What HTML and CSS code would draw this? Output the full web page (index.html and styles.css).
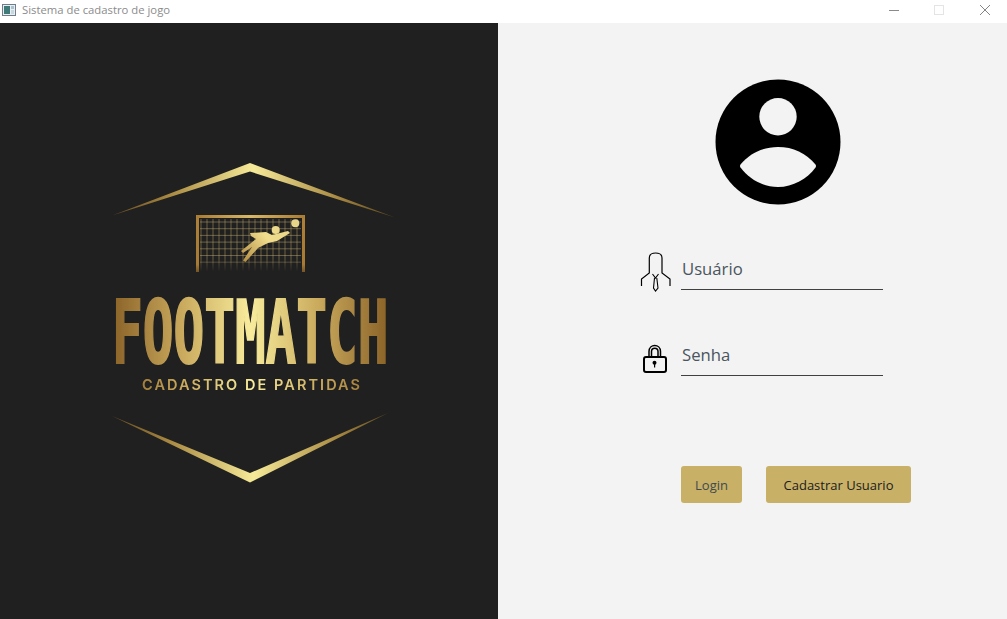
FILE: index.html
```html
<!DOCTYPE html>
<html lang="pt">
<head>
<meta charset="utf-8">
<title>Sistema de cadastro de jogo</title>
<link rel="stylesheet" href="styles.css">
</head>
<body>
<div class="window">
  <header class="titlebar">
    <svg class="app-icon" width="14" height="12" viewBox="0 0 14 12">
      <rect x="0.5" y="0.5" width="13" height="11" fill="#e8eef2" stroke="#6f7d88"/>
      <rect x="2" y="2" width="6" height="8" fill="#3f7a78"/>
      <rect x="9" y="2" width="3" height="3" fill="#a9c2d2"/>
      <rect x="9" y="6" width="3" height="4" fill="#c8d6de"/>
    </svg>
    <span class="title">Sistema de cadastro de jogo</span>
    <div class="controls">
      <svg class="ctl" width="46" height="23" viewBox="0 0 46 23"><path d="M20 10.5H30" stroke="#8a8a8a" fill="none"/></svg>
      <svg class="ctl" width="46" height="23" viewBox="0 0 46 23"><rect x="19.500" y="5.500" width="9" height="9" stroke="#e4e4e4" fill="none"/></svg>
      <svg class="ctl" width="46" height="23" viewBox="0 0 46 23"><path d="M19 5L29 15M29 5L19 15" stroke="#858585" fill="none"/></svg>
    </div>
  </header>
  <main class="content">
    <section class="brand">
      <svg class="logo" width="300" height="340" viewBox="100 150 300 340">
        <defs>
          <filter id="soft" x="-5%" y="-5%" width="110%" height="110%"><feGaussianBlur stdDeviation="0.45"/></filter>
          <linearGradient id="gv" gradientUnits="userSpaceOnUse" x1="114" y1="0" x2="390" y2="0">
            <stop offset="0" stop-color="#8a6228"/>
            <stop offset="0.25" stop-color="#c9a95c"/>
            <stop offset="0.5" stop-color="#f8ec9c"/>
            <stop offset="0.75" stop-color="#c9a95c"/>
            <stop offset="1" stop-color="#8a6228"/>
          </linearGradient>
          <linearGradient id="gv2" gradientUnits="objectBoundingBox" x1="0" y1="0" x2="1" y2="0">
            <stop offset="0" stop-color="#8a6228"/>
            <stop offset="0.25" stop-color="#c9a95c"/>
            <stop offset="0.5" stop-color="#f8ec9c"/>
            <stop offset="0.75" stop-color="#c9a95c"/>
            <stop offset="1" stop-color="#8a6228"/>
          </linearGradient>
          <linearGradient id="gchev" gradientUnits="userSpaceOnUse" x1="114" y1="0" x2="393" y2="0">
            <stop offset="0" stop-color="#7c5a24" stop-opacity="0.8"/>
            <stop offset="0.2" stop-color="#a98a42"/>
            <stop offset="0.5" stop-color="#f6ea98"/>
            <stop offset="0.8" stop-color="#a98a42"/>
            <stop offset="1" stop-color="#7c5a24" stop-opacity="0.7"/>
          </linearGradient>
          <linearGradient id="gframe" gradientUnits="userSpaceOnUse" x1="196" y1="0" x2="305" y2="0">
            <stop offset="0" stop-color="#a87a34"/>
            <stop offset="0.5" stop-color="#d8b868"/>
            <stop offset="1" stop-color="#a87a34"/>
          </linearGradient>
          <linearGradient id="gpost" gradientUnits="userSpaceOnUse" x1="0" y1="215" x2="0" y2="273">
            <stop offset="0" stop-color="#ad8038"/>
            <stop offset="0.85" stop-color="#a87a34"/>
            <stop offset="1" stop-color="#6e5022"/>
          </linearGradient>
          <linearGradient id="gnet" gradientUnits="userSpaceOnUse" x1="0" y1="218" x2="0" y2="272">
            <stop offset="0" stop-color="#c8b070" stop-opacity="0.55"/>
            <stop offset="0.75" stop-color="#c8b070" stop-opacity="0.55"/>
            <stop offset="1" stop-color="#c8b070" stop-opacity="0"/>
          </linearGradient>
          <linearGradient id="gman" gradientUnits="userSpaceOnUse" x1="242" y1="262" x2="296" y2="220">
            <stop offset="0" stop-color="#b08a40"/>
            <stop offset="0.5" stop-color="#f0dc8c"/>
            <stop offset="1" stop-color="#e6d488"/>
          </linearGradient>
        </defs>
        <g filter="url(#soft)">
          <polygon points="112,215.500 250,163 395,217.500 250,171.500" fill="url(#gchev)"/>
          <path d="M201 219V271M207 219V271M213 219V271M219 219V271M225 219V271M231 219V271M237 219V271M243 219V271M249 219V271M255 219V271M261 219V271M267 219V271M273 219V271M279 219V271M285 219V271M291 219V271M297 219V271M200 222H301M200 228.700H301M200 235.400H301M200 242.100H301M200 248.800H301M200 255.500H301M200 262.200H301" stroke="url(#gnet)" stroke-width="0.8" fill="none"/>
          <path d="M197.500 272V216.500H303.500V272" fill="none" stroke="url(#gpost)" stroke-width="3"/>
          <path d="M197 216.500H304" fill="none" stroke="url(#gframe)" stroke-width="3"/>
          <circle cx="275.700" cy="230" r="4" fill="url(#gman)"/>
          <circle cx="295.300" cy="223.300" r="4" fill="url(#gman)"/>
          <path d="M250 233L266 232L272 235L288 231L290 233L277 241L268 243L258 248L245.500 262L243 260.500L252 247L243 253L241 251L256 239L251 236Z" fill="url(#gman)"/>
          <text class="logo-name" transform="translate(112 363) scale(0.58 1)" fill="url(#gv2)" stroke="url(#gv2)">FOOTMATCH</text>
          <text class="logo-sub" x="142" y="390" textLength="218" fill="url(#gv)">CADASTRO DE PARTIDAS</text>
          <polygon points="112,416 250,473 388,413 250,482.500" fill="url(#gchev)"/>
        </g>
      </svg>
    </section>
    <section class="login">
      <svg class="avatar" width="126" height="126" viewBox="0 0 126 126">
        <circle cx="63" cy="63" r="62.500" fill="#000"/>
        <circle cx="63" cy="37.700" r="18.700" fill="#f3f3f3"/>
        <path d="M25.500 85.500C35 74 48 68 63 68C78 68 91 74 100.500 85.500Q101.500 87 100.500 88.500C92 100 78 108 63 108C48 108 34 100 25.500 88.500Q24.500 87 25.500 85.500Z" fill="#f3f3f3"/>
      </svg>
      <div class="field">
        <svg class="field-icon" width="31" height="42" viewBox="0 0 31 42">
          <path d="M9.300 8C9.300 4 12 3 15.600 3C19 3 22 4 22 8V23L30 29V36M9.300 8V23L1.500 29V36" fill="none" stroke="#000" stroke-width="1.200"/>
          <path d="M12.500 24L15.500 28L18.500 24M14.500 28L13.500 38L15.500 41L18 38L16.800 28" fill="none" stroke="#000" stroke-width="1.100"/>
        </svg>
        <input class="field-input" type="text" placeholder="Usuário">
      </div>
      <div class="field field-pass">
        <svg class="field-icon" width="31" height="42" viewBox="0 0 31 42">
          <path d="M9 20V15.500C9 7.500 20.500 7.500 20.500 15.500V20M11.500 20V15.500C11.500 11 18 11 18 15.500V20" fill="none" stroke="#000" stroke-width="1.500"/>
          <rect x="4" y="21" width="22" height="15" rx="2" fill="none" stroke="#000" stroke-width="2"/>
          <circle cx="14.500" cy="26.700" r="2" fill="#000"/>
          <rect x="14" y="27" width="1.200" height="4.500" fill="#000"/>
        </svg>
        <input class="field-input" type="password" placeholder="Senha">
      </div>
      <div class="actions">
        <button class="btn btn-login" type="button">Login</button>
        <button class="btn btn-register" type="button">Cadastrar Usuario</button>
      </div>
    </section>
  </main>
</div>
</body>
</html>
```
FILE: styles.css
```css
* { box-sizing: border-box; }
html, body { margin: 0; height: 100%; overflow: hidden; }
body { font-family: "Open Sans", "Noto Sans", "Liberation Sans", sans-serif; background: #f3f3f3; }
.window { display: flex; flex-direction: column; height: 619px; }
.titlebar { display: flex; align-items: flex-start; height: 23px; background: #fff; padding-left: 2px; }
.app-icon { flex: none; margin-top: 4px; }
.title { margin-left: 6px; font-size: 11.300px; line-height: 20px; color: #8b8b8b; }
.controls { display: flex; margin-left: auto; }
.ctl { display: block; }
.content { display: flex; flex: 1; min-height: 0; }
.brand { width: 498px; flex: none; background: #202020; padding: 127px 0 0 100px; }
.logo { display: block; }
.logo-name { font-family: "DejaVu Sans Mono", "Liberation Mono", monospace; font-weight: 700; font-size: 88px; stroke-width: 2px; }
.logo-sub { font-family: "Inter", "Liberation Sans", sans-serif; font-weight: 600; font-size: 14.500px; }
.login { flex: 1; display: flex; flex-direction: column; align-items: flex-start; padding: 56px 0 0 142px; background: #f3f3f3; }
.avatar { display: block; margin-left: 75px; margin-bottom: 45px; }
.field { display: flex; align-items: flex-start; height: 40px; }
.field-pass { margin-top: 46px; }
.field-icon { flex: none; display: block; margin-right: 10px; }
.field-input { width: 202px; height: 40px; border: 0; border-bottom: 1px solid #404040; background: transparent; padding: 0 0 2px 1px; font: 400 16.700px "Open Sans", "Noto Sans", sans-serif; color: #4a5560; outline: none; }
.field-input::placeholder { color: #4a5560; opacity: 1; }
.actions { display: flex; gap: 24px; margin-top: 90px; margin-left: 41px; }
.btn { height: 37px; border: 0; border-radius: 3px; background: #c8b067; font: 400 13px "Open Sans", "Noto Sans", sans-serif; padding: 0; }
.btn-login { width: 61px; color: #3e4a50; }
.btn-register { width: 145px; color: #1c1c1c; }
```
